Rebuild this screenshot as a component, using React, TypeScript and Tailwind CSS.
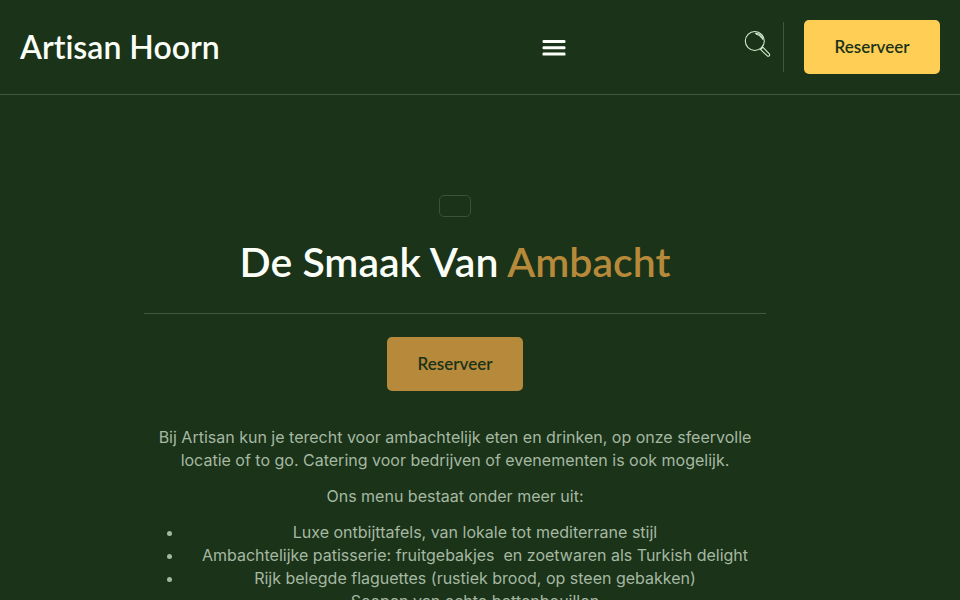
const dishes = [
  'Luxe ontbijttafels, van lokale tot mediterrane stijl',
  'Ambachtelijke patisserie: fruitgebakjes\u00a0 en zoetwaren als Turkish delight',
  'Rijk belegde flaguettes (rustiek brood, op steen gebakken)',
  'Soepen van echte bottenbouillon',
];

function MenuIcon() {
  return (
    <svg xmlns="http://www.w3.org/2000/svg" className="h-[18px] w-6" viewBox="0 0 24 18" fill="currentColor">
      <rect x="0.5" y="2" width="23" height="3" rx="1.2" />
      <rect x="0.5" y="8.3" width="23" height="3" rx="1.2" />
      <rect x="0.5" y="14.6" width="23" height="3" rx="1.2" />
    </svg>
  );
}

function SearchIcon() {
  return (
    <svg
      xmlns="http://www.w3.org/2000/svg"
      className="h-7 w-7"
      viewBox="0 0 28 28"
      fill="none"
      stroke="currentColor"
      strokeWidth={1.1}
      strokeLinecap="round"
      strokeLinejoin="round"
    >
      <circle cx="10.8" cy="11" r="9.5" />
      <path d="M11.3 3.2c4 .2 6.9 2.7 7.5 6.2" />
      <path d="M12.4 4.2c2.4.5 4.2 1.8 5.3 3.8" />
      <path d="M16.4 19.4l1.4-.9 1-1.4 6.5 6.8c1.1 1.3-.8 3.1-2 1.9z" />
    </svg>
  );
}

function Header() {
  return (
    <header className="border-b border-[#3f5a3d]">
      <div className="flex items-center px-5 py-5">
        <div className="w-[38%]">
          <a
            href="#"
            className="font-['Lato'] text-[32px] leading-10 font-semibold whitespace-nowrap [font-variant-ligatures:none]"
          >
            Artisan Hoorn
          </a>
        </div>

        <nav className="flex flex-1 justify-center">
          <button type="button" aria-label="Menu" className="p-1">
            <MenuIcon />
          </button>
        </nav>

        <div className="flex items-center">
          <button type="button" aria-label="Zoeken" className="mr-[11px] mb-1.5 pl-1.5 text-[#d5ecd0]">
            <SearchIcon />
          </button>
          <div className="mr-5 h-[50px] w-px bg-[#3f5a3d]" />
          <ReserveButton className="bg-[#ffce54]" />
        </div>
      </div>
    </header>
  );
}

function ReserveButton({ className }: { className: string }) {
  return (
    <a
      href="#reserveer"
      className={`flex h-[54px] w-[136px] items-center justify-center rounded-[5px] font-['Lato'] text-[17px] font-semibold text-[#1a3319] ${className}`}
    >
      Reserveer
    </a>
  );
}

export default function App() {
  return (
    <div className="min-h-screen bg-[#1a3319] text-[#fbfff8]">
      <Header />

      <main className="pt-[100px] pr-[50px] pb-20">
        <div className="mx-auto flex max-w-[622px] flex-col items-center text-center">
          <div className="h-[22px] w-8 rounded-[5px] border border-[#3a5438]" />

          <h1 className="mt-5 w-full border-b border-[#3f5a3d] pb-[26px] font-['Lato'] text-[41px] leading-[50px] font-semibold">
            De Smaak Van <span className="text-[#b68a3a]">Ambacht</span>
          </h1>

          <ReserveButton className="mt-[23px] bg-[#b68a3a]" />

          <div className="mt-[35px] w-full font-['Inter'] text-[16px] leading-[23px] text-[#a6b8a2]">
            <p>
              Bij Artisan kun je terecht voor ambachtelijk eten en drinken, op onze sfeervolle locatie of to go.
              Catering voor bedrijven of evenementen is ook mogelijk.
            </p>
            <p className="my-[13px]">Ons menu bestaat onder meer uit:</p>
            <ul className="list-disc pl-10">
              {dishes.map((dish) => (
                <li key={dish}>{dish}</li>
              ))}
            </ul>
          </div>
        </div>
      </main>
    </div>
  );
}
